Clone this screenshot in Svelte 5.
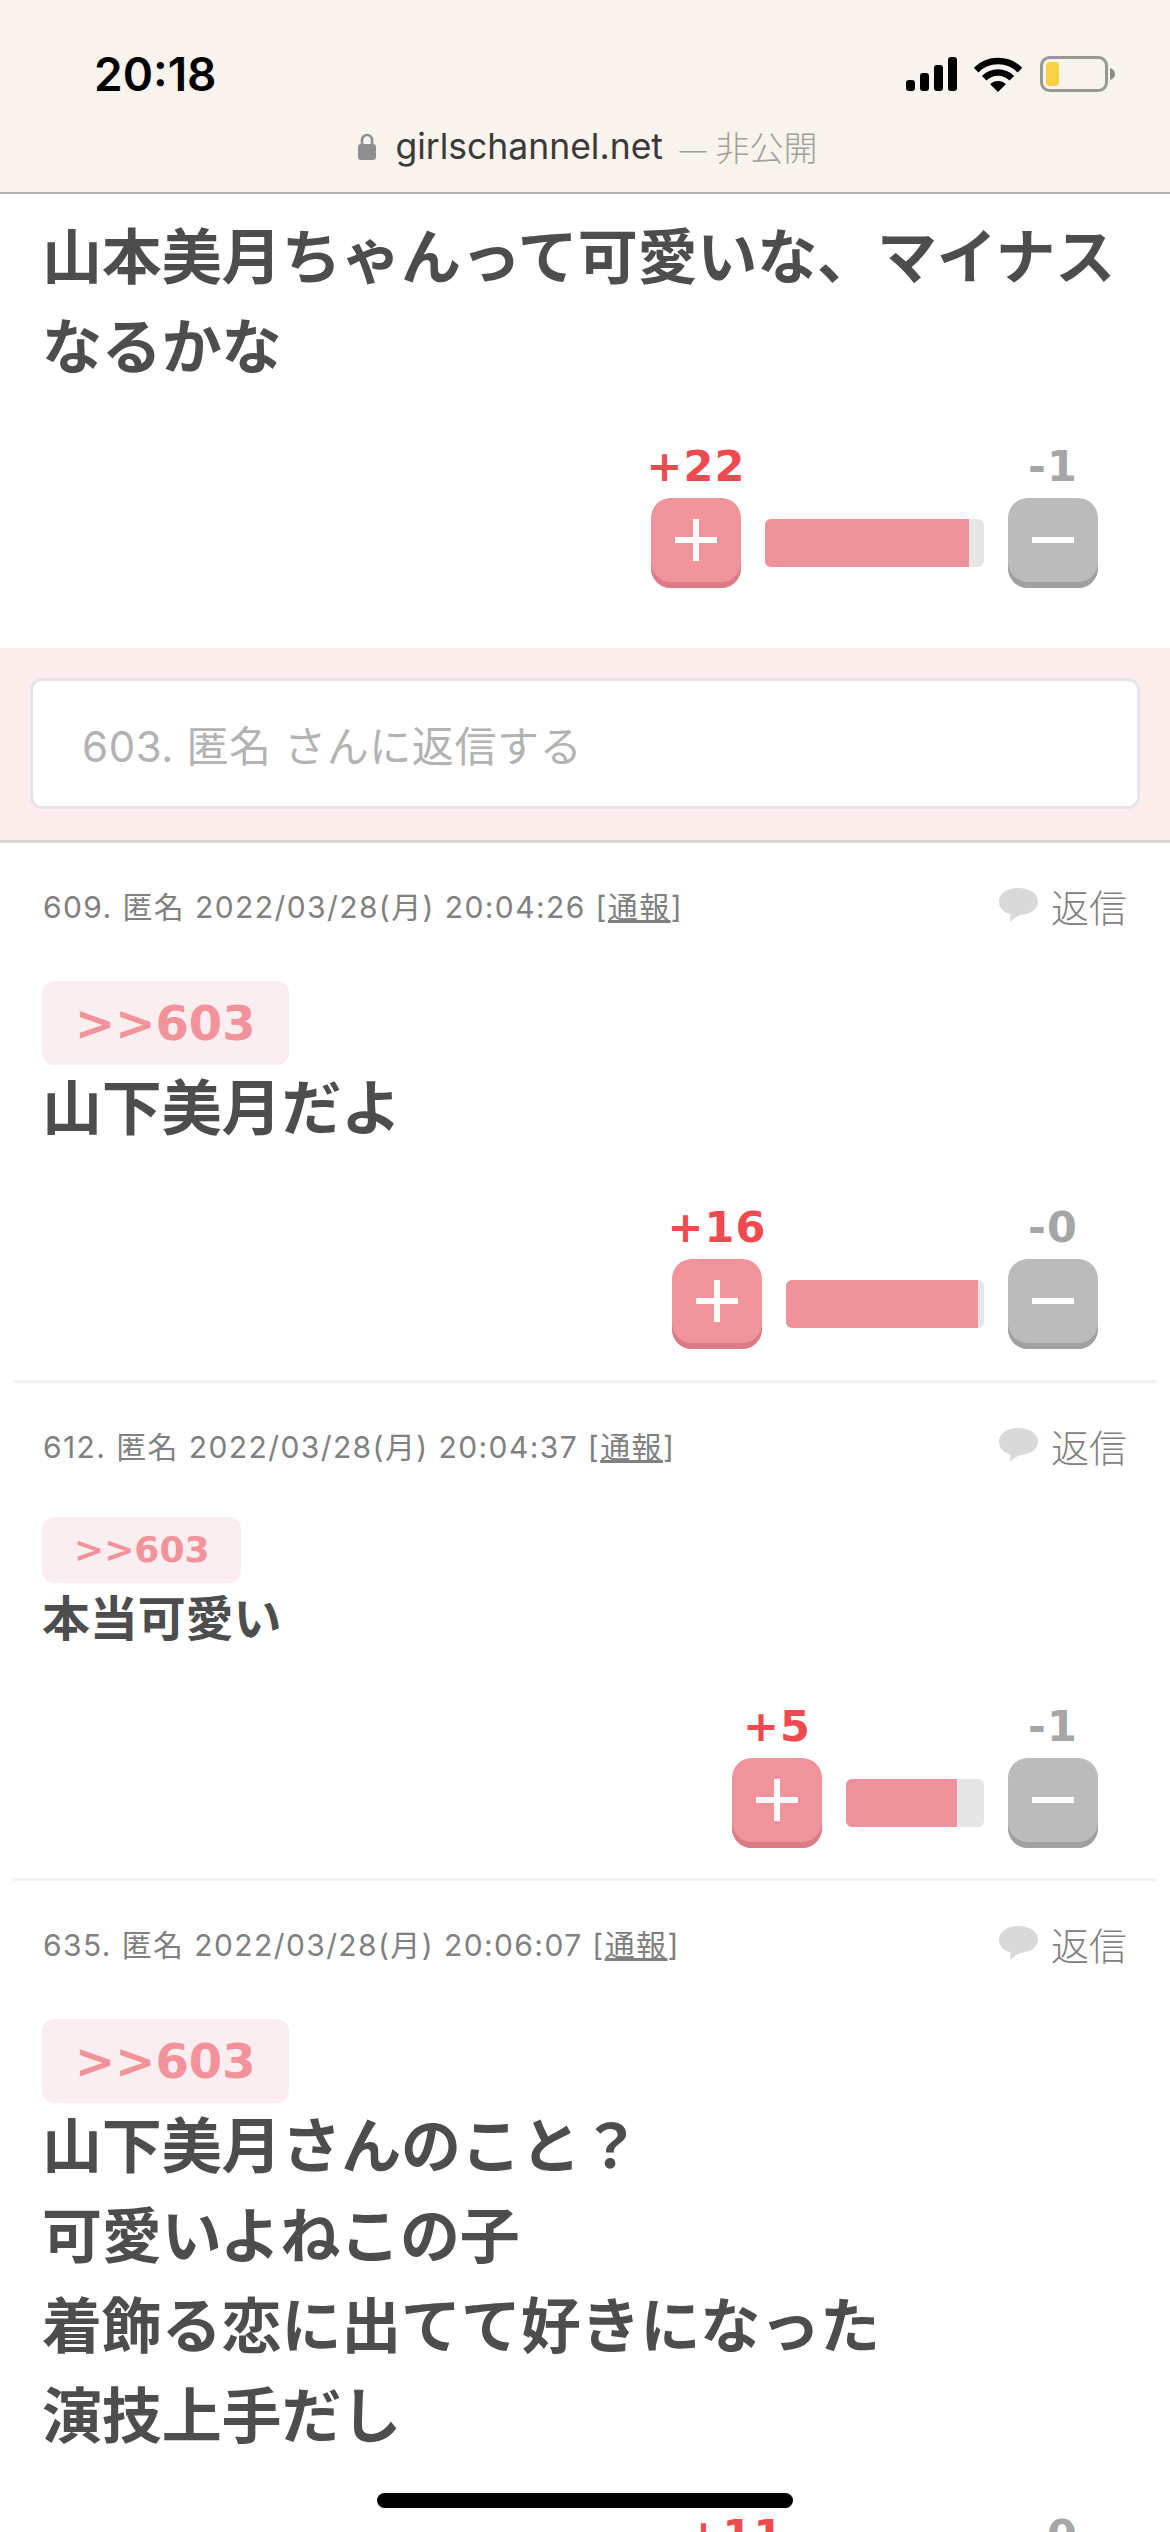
<script>
  const comments = [
    { id: 609, time: '20:04:26', size: 'lg', lines: ['山下美月だよ'], plus: 16, minus: 0, bar: 198, fill: 192 },
    { id: 612, time: '20:04:37', size: 'sm', lines: ['本当可愛い'], plus: 5, minus: 1, bar: 138, fill: 111 },
    { id: 635, time: '20:06:07', size: 'lg', lines: ['山下美月さんのこと？', '可愛いよねこの子', '着飾る恋に出てて好きになった', '演技上手だし'], plus: 11, minus: 0, bar: 180, fill: 170 }
  ];
</script>

{#snippet votes(plus, minus, bar, fill)}
  <div class="votes">
    <div class="vote">
      <span class="count red">+{plus}</span>
      <div class="btn pink">
        <svg width="42" height="42" viewBox="0 0 42 42"><path d="M18 0h6v18h18v6H24v18h-6V24H0v-6h18z" fill="#fff" /></svg>
      </div>
    </div>
    <div class="bar" style="width:{bar}px"><div class="fill" style="width:{fill}px"></div></div>
    <div class="vote">
      <span class="count grey">-{minus}</span>
      <div class="btn gray">
        <svg width="42" height="42" viewBox="0 0 42 42"><path d="M0 18h42v6H0z" fill="#fff" /></svg>
      </div>
    </div>
  </div>
{/snippet}

<div class="page">
  <header class="top">
    <div class="status">
      <span class="clock">20:18</span>
      <div class="icons">
        <svg class="signal" width="51" height="34" viewBox="0 0 51 34" fill="#000">
          <rect x="0" y="23" width="9" height="11" rx="3" />
          <rect x="14" y="16" width="9" height="18" rx="3" />
          <rect x="28" y="8" width="9" height="26" rx="3" />
          <rect x="42" y="0" width="9" height="34" rx="3" />
        </svg>
        <svg class="wifi" width="48" height="36" viewBox="0 0 48 36" fill="none" stroke="#000" stroke-width="6.5">
          <path d="M2.1 14.1A31 31 0 0 1 45.9 14.1" />
          <path d="M10.2 22.2A19.5 19.5 0 0 1 37.8 22.2" />
          <path d="M24 36L16.2 28.2A11 11 0 0 1 31.8 28.2Z" fill="#000" stroke="none" />
        </svg>
        <svg class="battery" width="75" height="36" viewBox="0 0 75 36">
          <rect x="1.5" y="1.5" width="65" height="33" rx="8" fill="none" stroke="#9b9893" stroke-width="3" />
          <rect x="6" y="6" width="13" height="24" rx="4" fill="#f9cf45" />
          <path d="M70 12c3 1 5 3 5 6s-2 5-5 6z" fill="#8f8c87" />
        </svg>
      </div>
    </div>
    <div class="url">
      <svg width="18" height="27" viewBox="0 0 18 27"><path d="M4 12V7a5 5 0 0 1 10 0v5" fill="none" stroke="#8e8e8e" stroke-width="2.6" /><rect x="0" y="11" width="18" height="16" rx="3" fill="#8e8e8e" /></svg>
      <span class="domain">girlschannel.net</span>
      <span class="private">— 非公開</span>
    </div>
  </header>

  <section class="parent">
    <p class="body">山本美月ちゃんって可愛いな、マイナス<br />なるかな</p>
    {@render votes(22, 1, 219, 204)}
  </section>

  <div class="reply">
    <div class="field">603. 匿名 さんに返信する</div>
  </div>

  {#each comments as c, i}
    <article class="comment {c.size}" class:last={i === comments.length - 1}>
      <div class="meta">
        <span class="info">{c.id}. 匿名 2022/03/28(月) {c.time} [<u>通報</u>]</span>
        <span class="back">
          <svg width="39" height="34" viewBox="0 0 39 34"><path d="M19.5 0C30.5 0 39 5.5 39 13.5S31 26 22 27c-4 .6-7 3.5-11 7l.6-7.6C4.500 24.500 0 20 0 13.500 0 5.500 8.500 0 19.500 0z" fill="#d9d9d9" /></svg>
          <span>返信</span>
        </span>
      </div>
      <div class="tag">&gt;&gt;603</div>
      <p class="body">{#each c.lines as l, j}{l}{#if j < c.lines.length - 1}<br />{/if}{/each}</p>
      {@render votes(c.plus, c.minus, c.bar, c.fill)}
    </article>
  {/each}

  <div class="home"></div>
</div>

<style>
  :global(body) { margin: 0; background: #fff; }
  .page {
    position: relative;
    width: 1170px;
    height: 2532px;
    overflow: hidden;
    background: #fff;
    font-family: Inter, "Noto Sans CJK JP", sans-serif;
  }
  .top {
    height: 192px;
    background: #f9f3ed;
    border-bottom: 2px solid #b4b1ac;
  }
  .status {
    display: flex;
    justify-content: space-between;
    align-items: center;
    height: 74px;
    padding: 37px 55px 0 94px;
  }
  .clock {
    font-weight: 600;
    font-size: 46px;
    color: #000;
  }
  .icons { display: flex; align-items: center; }
  .wifi { margin-left: 17px; }
  .battery { margin-left: 18px; }
  .url {
    display: flex;
    align-items: center;
    justify-content: center;
    height: 40px;
    margin-top: 15px;
    padding-left: 6px;
  }
  .domain { margin-left: 19px; color: #3b3a38; font-size: 35.5px; }
  .private { margin-left: 15px; color: #a3a09c; font-family: "Noto Sans CJK JP", sans-serif; font-weight: 300; font-size: 34px; }

  .parent { padding: 21px 0 60px; }
  .body {
    padding: 0 0 7px 42px;
    margin: -7px 0 0;
    font-family: "Noto Sans CJK JP", sans-serif;
    font-weight: 700;
    color: #4d4d4d;
    font-size: 60px;
    line-height: 90px;
    letter-spacing: -0.15px;
  }

  .votes {
    display: flex;
    justify-content: flex-end;
    align-items: flex-end;
    gap: 24px;
    padding-right: 72px;
    margin-top: 52px;
  }
  .vote { width: 90px; display: flex; flex-direction: column; align-items: center; }
  .count {
    font-family: "DejaVu Sans", sans-serif;
    font-weight: 700;
    font-size: 43px;
    letter-spacing: 1px;
    line-height: 39px;
    margin-bottom: 12px;
    white-space: nowrap;
  }
  .red { color: #ee4a4f; }
  .grey { color: #a6a6a6; }
  .btn {
    width: 90px;
    height: 90px;
    border-radius: 20px;
    display: flex;
    align-items: flex-start;
    justify-content: center;
    padding-top: 21px;
    box-sizing: border-box;
  }
  .pink { background: #f1939b; box-shadow: inset 0 -6px 0 #dc7b85; }
  .gray { background: #bbb; box-shadow: inset 0 -6px 0 #a0a0a0; }
  .bar {
    height: 48px;
    margin-bottom: 21px;
    background: #e6e6e6;
    border-radius: 6px;
    overflow: hidden;
  }
  .fill { height: 100%; background: #f0929b; }

  .reply {
    background: #fcecec;
    height: 162px;
    padding: 30px 30px 0;
    border-bottom: 3px solid #d9d9d9;
  }
  .field {
    height: 131px;
    width: 1110px;
    box-sizing: border-box;
    background: #fff;
    border: 3px solid #e6e6e6;
    border-radius: 12px;
    padding-left: 49px;
    display: flex;
    align-items: center;
    font-size: 42px;
    letter-spacing: 0.6px;
    color: #b3b3b3;
  }

  .comment {
    margin: 0 13px;
    padding: 37px 0 31px;
    border-bottom: 3px solid #f2f2f2;
  }
  .comment.sm { padding-bottom: 30px; }
  .comment.last { border-bottom: 0; }
  .comment .votes { padding-right: 59px; }
  .meta {
    display: flex;
    justify-content: space-between;
    align-items: center;
    height: 50px;
    padding: 0 30px;
    font-size: 30px;
    color: #808080;
    margin-bottom: 51px;
  }
  .info { letter-spacing: 1.4px; }
  .back { display: flex; align-items: center; gap: 13px; font-size: 38px; font-weight: 300; }
  .tag {
    width: fit-content;
    margin-left: 29px;
    background: #fbeef0;
    color: #f2929a;
    font-family: "DejaVu Sans", sans-serif;
    font-weight: 700;
    border-radius: 12px;
    font-size: 48px;
    line-height: 84px;
    padding: 0 33px;
  }
  .comment .body { padding: 0 0 7px 29px; margin: -6px 0 0; }
  .comment.sm .tag { font-size: 36px; line-height: 66px; padding: 0 32px; margin-top: -4px; }
  .comment.sm .body { font-size: 48px; line-height: 72px; padding: 0 0 4px 29px; margin: -4px 0 0; }

  .home {
    position: absolute;
    left: 377px;
    top: 2493px;
    width: 416px;
    height: 15px;
    border-radius: 8px;
    background: #000;
  }
</style>
